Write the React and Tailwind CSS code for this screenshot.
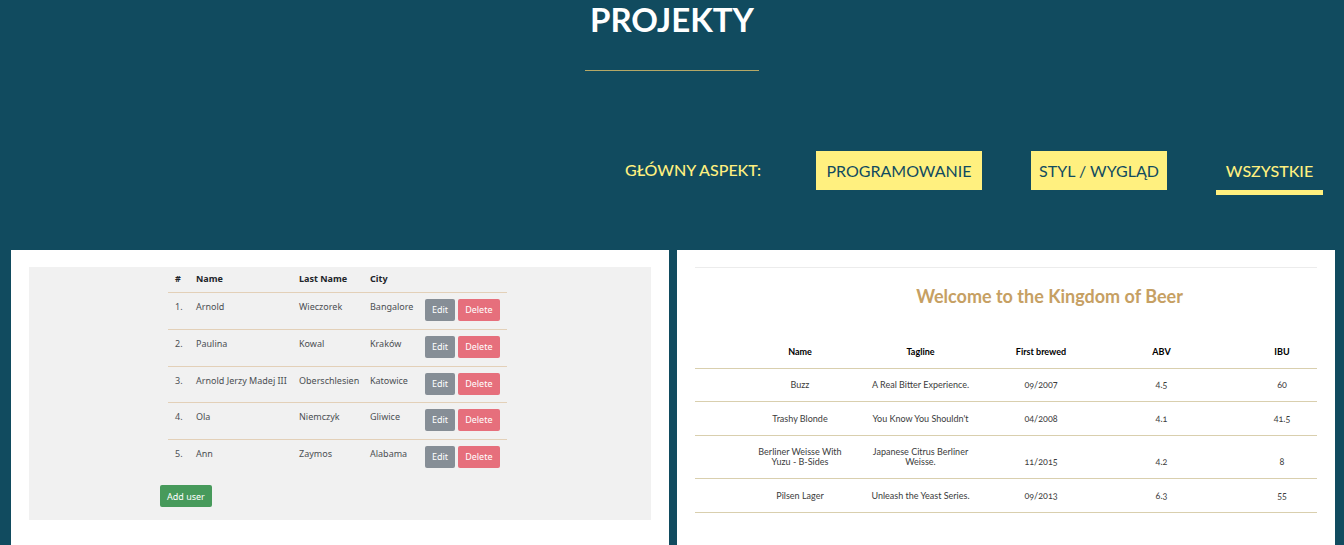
const users = [
  ["Arnold", "Wieczorek", "Bangalore"],
  ["Paulina", "Kowal", "Kraków"],
  ["Arnold Jerzy Madej III", "Oberschlesien", "Katowice"],
  ["Ola", "Niemczyk", "Gliwice"],
  ["Ann", "Zaymos", "Alabama"],
];

const beers = [
  ["Buzz", "A Real Bitter Experience.", "09/2007", "4.5", "60"],
  ["Trashy Blonde", "You Know You Shouldn't", "04/2008", "4.1", "41.5"],
  ["Berliner Weisse With Yuzu - B-Sides", "Japanese Citrus Berliner Weisse.", "11/2015", "4.2", "8"],
  ["Pilsen Lager", "Unleash the Yeast Series.", "09/2013", "6.3", "55"],
];

function Filters() {
  const filled = "h-[39px] bg-[#fff07f] px-2 text-[#114b5f]";
  return (
    <div className="mt-20 flex items-start justify-end pr-[21px] text-[16px] leading-[39px]">
      <span id="aspect" className="mr-[55px] -mt-px font-medium text-[#fff07f]">GŁÓWNY ASPEKT:</span>
      <div role="group" aria-labelledby="aspect" className="flex items-start gap-[49px]">
        <button type="button" className={`${filled} min-w-[166px]`}>PROGRAMOWANIE</button>
        <button type="button" className={`${filled} min-w-[136px]`}>STYL / WYGLĄD</button>
        <button type="button" aria-pressed="true" className="min-w-[107px] border-b-5 border-[#fff07f] px-2 font-medium text-[#fff07f]">
          WSZYSTKIE
        </button>
      </div>
    </div>
  );
}

function UsersProject() {
  const button = "h-[22px] rounded-[2px] px-[7px] pt-px text-white";
  return (
    <article className="flex-1 bg-white px-[18px] pt-[17px]">
      <div className="flex h-[253px] justify-center bg-[#f1f1f1] font-['Noto_Sans',sans-serif] text-[9px] leading-[12px] text-[#4b4f53]">
        <div className="-ml-[13px]">
          <table className="ml-2 w-[339px] table-fixed border-collapse text-left">
            <colgroup>
              <col className="w-[21px]" />
              <col className="w-[103px]" />
              <col className="w-[71px]" />
              <col className="w-[55px]" />
              <col />
            </colgroup>
            <thead>
              <tr className="h-[25px] text-[#212529]">
                <th className="pl-[7px]">#</th>
                <th className="pl-[7px]">Name</th>
                <th className="pl-[7px]">Last Name</th>
                <th className="pl-[7px]">City</th>
                <td></td>
              </tr>
            </thead>
            <tbody>
              {users.map(([name, last, city], i) => (
                <tr key={name} className="h-[37px] border-t border-[#e3d0b8] align-top nth-[3n]:h-[36px]">
                  <td className="pt-2 pl-[7px]">{i + 1}.</td>
                  <td className="pt-2 pl-[7px] whitespace-nowrap">{name}</td>
                  <td className="pt-2 pl-[7px]">{last}</td>
                  <td className="pt-2 pl-[7px]">{city}</td>
                  <td className="pt-[6px] pl-[7px]">
                    <div className="flex gap-[3px]">
                      <button type="button" className={`${button} bg-[#868e96]`}>Edit</button>
                      <button type="button" className={`${button} bg-[#e66f7c]`}>Delete</button>
                    </div>
                  </td>
                </tr>
              ))}
            </tbody>
          </table>
          <button type="button" className={`${button} mt-[9px] bg-[#479a5b]`}>Add user</button>
        </div>
      </div>
    </article>
  );
}

function BeerProject() {
  return (
    <article className="flex-1 bg-white px-[18px] pt-[17px]">
      <div className="border-t border-[#ececec] text-center">
        <h2 className="mt-[15px] ml-[87px] text-[18px] leading-[26px] font-bold text-[#c6a063]">
          Welcome to the Kingdom of Beer
        </h2>
        <table className="mt-[31px] w-full table-fixed border-collapse text-[9px] leading-[10px] text-[#3c3c3c] oldstyle-nums">
          <colgroup>
            <col className="w-[45px]" />
            <col className="w-[120px]" />
            <col className="w-[121px]" />
            <col className="w-[120px]" />
            <col className="w-[121px]" />
            <col />
          </colgroup>
          <thead>
            <tr className="h-[28px] border-b border-[#d9cfae] align-bottom text-black">
              <td></td>
              {["Name", "Tagline", "First brewed", "ABV", "IBU"].map((h) => (
                <th key={h} className="px-3 pb-[11px] last:pr-0 last:pl-[25px]">{h}</th>
              ))}
            </tr>
          </thead>
          <tbody>
            {beers.map((beer) => (
              <tr key={beer[0]} className="h-[33px] border-b border-[#d9cfae] align-bottom even:h-[34px]">
                <td></td>
                {beer.map((v) => (
                  <td key={v} className="px-[10px] pt-[11px] pb-[11px] last:pr-0 last:pl-[25px]">{v}</td>
                ))}
              </tr>
            ))}
          </tbody>
        </table>
      </div>
    </article>
  );
}

export default function App() {
  return (
    <main className="flex min-h-screen flex-col bg-[#114b5f] font-[Lato,sans-serif]">
      <h1 className="mx-auto w-[174px] border-b border-[#b5a866] pb-[31px] text-center text-[33px] leading-[39px] font-bold text-white">
        PROJEKTY
      </h1>
      <Filters />
      <section className="mt-[55px] flex grow gap-2 pr-[9px] pl-[11px]">
        <UsersProject />
        <BeerProject />
      </section>
    </main>
  );
}
